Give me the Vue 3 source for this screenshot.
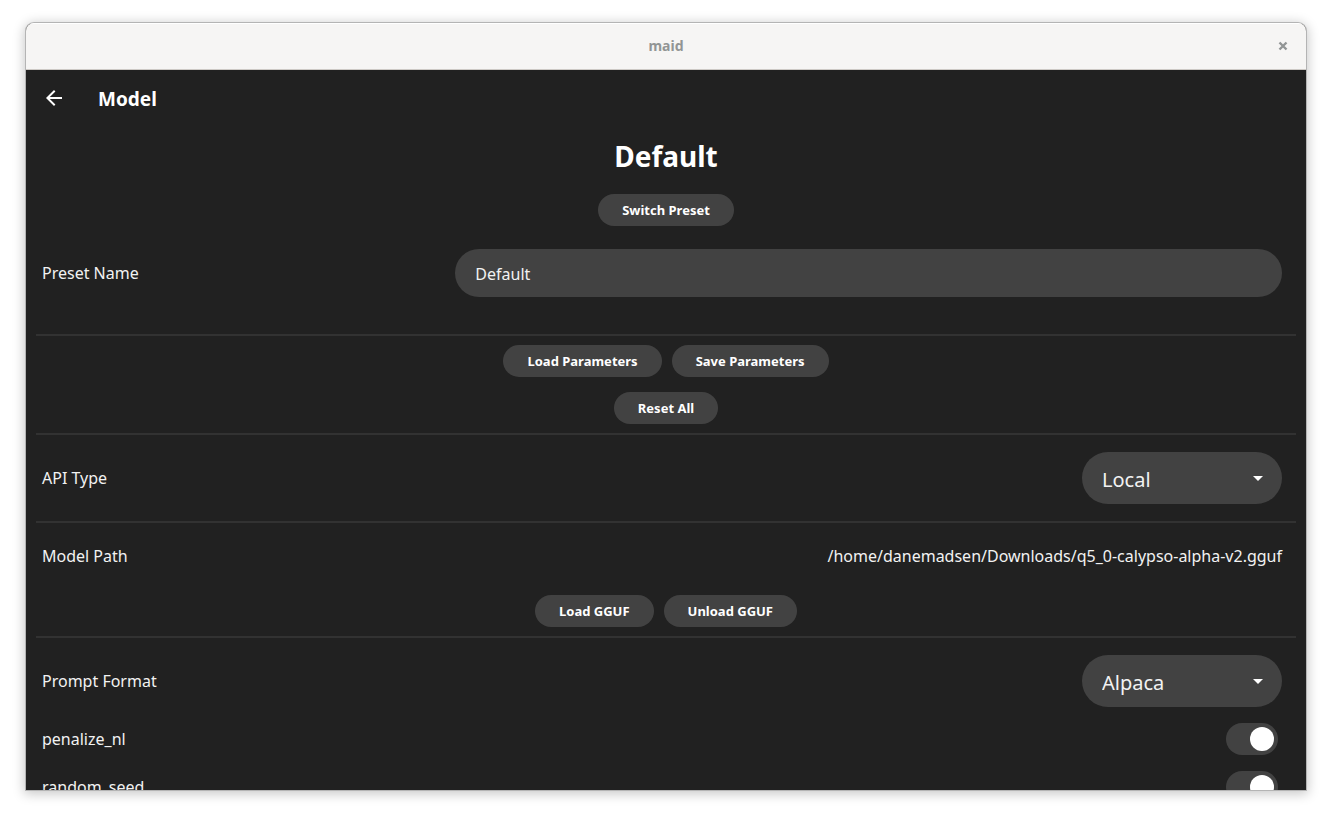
<script setup>
import { ref } from 'vue'

const presetName = ref('Default')
const apiType = ref('Local')
const promptFormat = ref('Alpaca')
const toggles = ref([
  { name: 'penalize_nl', on: true },
  { name: 'random_seed', on: true },
])
const modelPath = '/home/danemadsen/Downloads/q5_0-calypso-alpha-v2.gguf'
</script>

<template>
  <div class="desktop">
    <div class="window">
      <header class="titlebar">
        <span class="window-title">maid</span>
        <button class="close" type="button" aria-label="Close">
          <svg width="10" height="10" viewBox="0 0 10 10" aria-hidden="true">
            <path d="M1.5 1.5 8.5 8.5M8.5 1.5 1.5 8.5" fill="none" stroke="#929595" stroke-width="2.4" />
          </svg>
        </button>
      </header>

      <div class="appbar">
        <button class="back" type="button" aria-label="Back">
          <svg width="24" height="24" viewBox="0 0 24 24" aria-hidden="true">
            <path d="M20 11H7.83l5.59-5.59L12 4l-8 8 8 8 1.41-1.41L7.83 13H20v-2z" fill="#fff" />
          </svg>
        </button>
        <h1>Model</h1>
      </div>

      <main class="content">
        <h2>{{ presetName }}</h2>
        <div class="actions">
          <button class="pill" type="button">Switch Preset</button>
        </div>
        <div class="row preset">
          <label for="preset-name">Preset Name</label>
          <input id="preset-name" v-model="presetName" class="field" type="text" />
        </div>

        <hr />
        <div class="stack">
          <div class="actions">
            <button class="pill" type="button">Load Parameters</button>
            <button class="pill" type="button">Save Parameters</button>
          </div>
          <div class="actions">
            <button class="pill" type="button">Reset All</button>
          </div>
        </div>

        <hr />
        <div class="row choice">
          <label for="api-type">API Type</label>
          <div class="select">
            <select id="api-type" v-model="apiType">
              <option>Local</option>
            </select>
            <svg width="10" height="5" viewBox="0 0 10 5" aria-hidden="true"><path d="M0 0h10L5 5z" fill="#fff" /></svg>
          </div>
        </div>

        <hr />
        <div class="row path">
          <span>Model Path</span>
          <span>{{ modelPath }}</span>
        </div>
        <div class="actions model-actions">
          <button class="pill" type="button">Load GGUF</button>
          <button class="pill" type="button">Unload GGUF</button>
        </div>

        <hr />
        <div class="row choice">
          <label for="prompt-format">Prompt Format</label>
          <div class="select">
            <select id="prompt-format" v-model="promptFormat">
              <option>Alpaca</option>
            </select>
            <svg width="10" height="5" viewBox="0 0 10 5" aria-hidden="true"><path d="M0 0h10L5 5z" fill="#fff" /></svg>
          </div>
        </div>
        <div v-for="toggle in toggles" :key="toggle.name" class="row toggle">
          <label :for="toggle.name">{{ toggle.name }}</label>
          <input :id="toggle.name" v-model="toggle.on" type="checkbox" role="switch" />
        </div>
      </main>
    </div>
  </div>
</template>

<style>
body {
  margin: 0;
  background: #fff;
}
</style>

<style scoped>
.desktop {
  box-sizing: border-box;
  height: 100vh;
  padding: 23px 26px 29px;
  font-family: "Noto Sans", "Open Sans", sans-serif;
  font-size: 16px;
  line-height: 24px;
  color: #f2f2f2;
}
.window {
  display: flex;
  flex-direction: column;
  height: 100%;
  overflow: hidden;
  border-radius: 8px 8px 0 0;
  background: #212121;
  box-shadow: 0 0 0 1px #b4b4b4, 0 2px 12px 2px rgba(0, 0, 0, 0.22);
}
button,
input,
select {
  font: inherit;
  color: inherit;
  border: 0;
  margin: 0;
}
.titlebar {
  box-sizing: border-box;
  flex: none;
  display: grid;
  grid-template-columns: 46px 1fr 46px;
  align-items: center;
  height: 47px;
  background: #f6f5f4;
  border-bottom: 1px solid #cdc9c5;
  box-shadow: inset 0 1px #fff;
}
.window-title {
  grid-column: 2;
  text-align: center;
  font-size: 14px;
  font-weight: 700;
  color: #929595;
}
.close,
.back {
  display: grid;
  place-items: center;
  padding: 0;
  background: none;
}
.close {
  height: 46px;
}
.appbar {
  flex: none;
  display: flex;
  align-items: center;
  gap: 16px;
  height: 56px;
}
.back {
  width: 56px;
  height: 56px;
}
h1,
h2 {
  margin: 0;
  font-weight: 700;
  color: #fff;
}
h1 {
  padding-top: 2px;
  font-size: 19px;
  line-height: 28px;
}
.content {
  flex: 1;
  min-height: 0;
  overflow: hidden;
}
h2 {
  font-size: 28px;
  line-height: 40px;
  padding: 10px 0 18px;
  text-align: center;
}
.actions {
  display: flex;
  justify-content: center;
  gap: 10px;
}
.stack {
  display: grid;
  gap: 15px;
  padding: 9px 0;
}
.pill {
  height: 32px;
  padding: 0 24px;
  border-radius: 16px;
  background: #424242;
  color: #fff;
  font-size: 13px;
  font-weight: 700;
  line-height: 20px;
}
.row {
  display: flex;
  align-items: center;
  justify-content: space-between;
  padding: 0 24px 0 16px;
}
.preset {
  display: grid;
  grid-template-columns: 1fr 2fr;
  padding-top: 23px;
  padding-bottom: 37px;
}
.field {
  box-sizing: border-box;
  min-width: 0;
  height: 48px;
  padding: 2px 20px 0;
  border-radius: 24px;
  background: #424242;
}
hr {
  height: 2px;
  margin: 0 10px;
  border: 0;
  background: #323232;
}
.choice {
  padding-top: 17px;
  padding-bottom: 17px;
}
.select {
  display: grid;
  width: 200px;
  align-items: center;
}
.select > * {
  grid-area: 1 / 1;
}
.select select {
  appearance: none;
  box-sizing: border-box;
  width: 100%;
  height: 52px;
  padding: 4px 40px 0 20px;
  border-radius: 26px;
  background: #424242;
  font-size: 20px;
}
.select svg {
  justify-self: end;
  margin-right: 19px;
  pointer-events: none;
}
.path {
  padding-top: 21px;
  padding-bottom: 27px;
}
.model-actions {
  padding-bottom: 9px;
}
.toggle {
  padding: 0 28px 16px 16px;
}
.choice + .toggle {
  margin-top: -1px;
}
.toggle input {
  appearance: none;
  box-sizing: border-box;
  display: flex;
  width: 52px;
  height: 32px;
  padding: 4px;
  border-radius: 16px;
  background: #424242;
}
.toggle input:checked {
  justify-content: flex-end;
}
.toggle input::before {
  content: "";
  width: 24px;
  height: 24px;
  border-radius: 50%;
  background: #fff;
}
</style>
